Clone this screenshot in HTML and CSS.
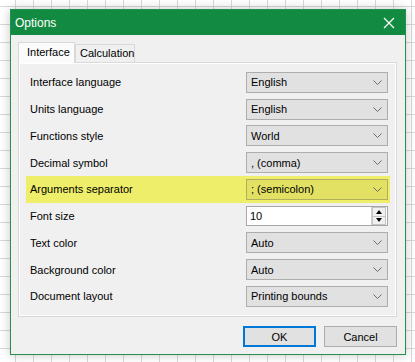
FILE: index.html
```html
<!DOCTYPE html>
<html lang="en">
<head>
    <meta charset="UTF-8">
    <title>Options</title>
    <link rel="stylesheet" href="styles.css">
</head>
<body>
    <div class="dialog">
        <div class="titlebar">
            <span class="title">Options</span>
            <svg class="close" width="12" height="12" viewBox="0 0 12 12">
                <path d="M1 1L11 11M11 1L1 11" stroke="#fff" stroke-width="1.2" fill="none"/>
            </svg>
        </div>
        <div class="dialog-body">
            <div class="tabs">
                <div class="tab active">Interface</div>
                <div class="tab">Calculation</div>
            </div>
            <div class="panel">
                <div class="row">
                    <span class="label">Interface language</span>
                    <div class="combo"><span>English</span><svg class="chev" width="9" height="5" viewBox="0 0 9 5"><path d="M0.5 0.5L4.5 4.5L8.5 0.5" stroke="#6d6d6d" fill="none"/></svg></div>
                </div>
                <div class="row">
                    <span class="label">Units language</span>
                    <div class="combo"><span>English</span><svg class="chev" width="9" height="5" viewBox="0 0 9 5"><path d="M0.5 0.5L4.5 4.5L8.5 0.5" stroke="#6d6d6d" fill="none"/></svg></div>
                </div>
                <div class="row">
                    <span class="label">Functions style</span>
                    <div class="combo"><span>World</span><svg class="chev" width="9" height="5" viewBox="0 0 9 5"><path d="M0.5 0.5L4.5 4.5L8.5 0.5" stroke="#6d6d6d" fill="none"/></svg></div>
                </div>
                <div class="row">
                    <span class="label">Decimal symbol</span>
                    <div class="combo"><span>, (comma)</span><svg class="chev" width="9" height="5" viewBox="0 0 9 5"><path d="M0.5 0.5L4.5 4.5L8.5 0.5" stroke="#6d6d6d" fill="none"/></svg></div>
                </div>
                <div class="row hl">
                    <span class="label">Arguments separator</span>
                    <div class="combo"><span>; (semicolon)</span><svg class="chev" width="9" height="5" viewBox="0 0 9 5"><path d="M0.5 0.5L4.5 4.5L8.5 0.5" stroke="#6d6d6d" fill="none"/></svg></div>
                </div>
                <div class="row">
                    <span class="label">Font size</span>
                    <div class="spinbox">
                        <span>10</span>
                        <div class="spin">
                            <div class="spin-btn"><i class="tri up"></i></div>
                            <div class="spin-btn"><i class="tri down"></i></div>
                        </div>
                    </div>
                </div>
                <div class="row">
                    <span class="label">Text color</span>
                    <div class="combo"><span>Auto</span><svg class="chev" width="9" height="5" viewBox="0 0 9 5"><path d="M0.5 0.5L4.5 4.5L8.5 0.5" stroke="#6d6d6d" fill="none"/></svg></div>
                </div>
                <div class="row">
                    <span class="label">Background color</span>
                    <div class="combo"><span>Auto</span><svg class="chev" width="9" height="5" viewBox="0 0 9 5"><path d="M0.5 0.5L4.5 4.5L8.5 0.5" stroke="#6d6d6d" fill="none"/></svg></div>
                </div>
                <div class="row">
                    <span class="label">Document layout</span>
                    <div class="combo"><span>Printing bounds</span><svg class="chev" width="9" height="5" viewBox="0 0 9 5"><path d="M0.5 0.5L4.5 4.5L8.5 0.5" stroke="#6d6d6d" fill="none"/></svg></div>
                </div>
            </div>
            <div class="footer">
                <button class="btn default">OK</button>
                <button class="btn">Cancel</button>
            </div>
        </div>
    </div>
</body>
</html>
```

FILE: styles.css
```css
body {
    margin: 0;
    padding: 9px 0 0 10px;
    height: 362px;
    box-sizing: border-box;
    overflow: hidden;
    font-family: "Liberation Sans", Arial, sans-serif;
    font-size: 11px;
    color: #000;
    background-color: #fff;
    background-image:
        linear-gradient(to right, #d8d8d8 1px, transparent 1px),
        linear-gradient(to bottom, #d8d8d8 1px, transparent 1px);
    background-size: 18px 18px;
    background-position: 15px 6px;
}

.dialog {
    width: 396px;
    height: 346px;
    box-sizing: border-box;
    border: 1px solid #23914d;
    background-color: #f0f0f0;
    box-shadow: 0 0 10px rgba(0, 0, 0, 0.22);
    display: flex;
    flex-direction: column;
}

.titlebar {
    height: 25px;
    background-color: #138a42;
    color: #fff;
    display: flex;
    align-items: center;
    justify-content: space-between;
    padding: 0 10px 0 4px;
    flex-shrink: 0;
}

.title {
    font-size: 12px;
}

.close {
    display: block;
}

.dialog-body {
    flex: 1;
    padding: 7px 8px 0 7px;
    display: flex;
    flex-direction: column;
}

.tabs {
    display: flex;
    align-items: flex-end;
    height: 20px;
    position: relative;
    z-index: 1;
}

.tab {
    height: 18px;
    box-sizing: border-box;
    border: 1px solid #d9d9d9;
    border-bottom: none;
    background-color: #f0f0f0;
    padding: 2px 0 0 4px;
    width: 60px;
}

.tab.active {
    height: 21px;
    width: 57px;
    margin-bottom: -1px;
    background-color: #fbfbfb;
    padding: 3px 0 0 8px;
}

.panel {
    height: 255px;
    box-sizing: border-box;
    border: 1px solid #d9d9d9;
    box-shadow: inset 0 0 0 1px #fff;
    padding: 6px 6px 0 7px;
}

.row {
    height: 26.75px;
    display: grid;
    grid-template-columns: 1fr 142px;
    align-items: center;
    padding: 0 2px 0 4px;
}

.row.hl {
    background-color: #efee6b;
    margin: 0 0 0 0;
}

.combo {
    height: 21px;
    box-sizing: border-box;
    border: 1px solid #adadad;
    background-color: #e1e1e1;
    display: flex;
    align-items: center;
    justify-content: space-between;
    padding: 0 5px 0 4px;
}

.row.hl .combo {
    background-color: #e2e163;
    border-color: #b0af5e;
}

.chev {
    display: block;
}

.spinbox {
    height: 20px;
    box-sizing: border-box;
    border: 1px solid #a6a6a6;
    background-color: #fff;
    display: flex;
    align-items: center;
    justify-content: space-between;
    padding-left: 3px;
}

.spin {
    width: 14px;
    height: 18px;
    border-left: 1px solid #d0d0d0;
    margin-right: 1px;
    display: flex;
    flex-direction: column;
}

.spin-btn {
    flex: 1;
    display: flex;
    align-items: center;
    justify-content: center;
    background-color: #f0f0f0;
    border: 1px solid #c4c4c4;
}

.spin-btn + .spin-btn {
    border-top: none;
}

.tri {
    width: 0;
    height: 0;
    border-left: 3px solid transparent;
    border-right: 3px solid transparent;
}

.tri.up {
    border-bottom: 4px solid #000;
}

.tri.down {
    border-top: 4px solid #000;
}

.footer {
    display: flex;
    justify-content: flex-end;
    gap: 8px;
    padding-top: 9px;
}

.btn {
    width: 73px;
    height: 21px;
    box-sizing: border-box;
    border: 1px solid #adadad;
    background-color: #e1e1e1;
    font-family: "Liberation Sans", Arial, sans-serif;
    font-size: 11px;
    color: #000;
    padding: 0;
}

.btn.default {
    border: 2px solid #0078d7;
}
```
